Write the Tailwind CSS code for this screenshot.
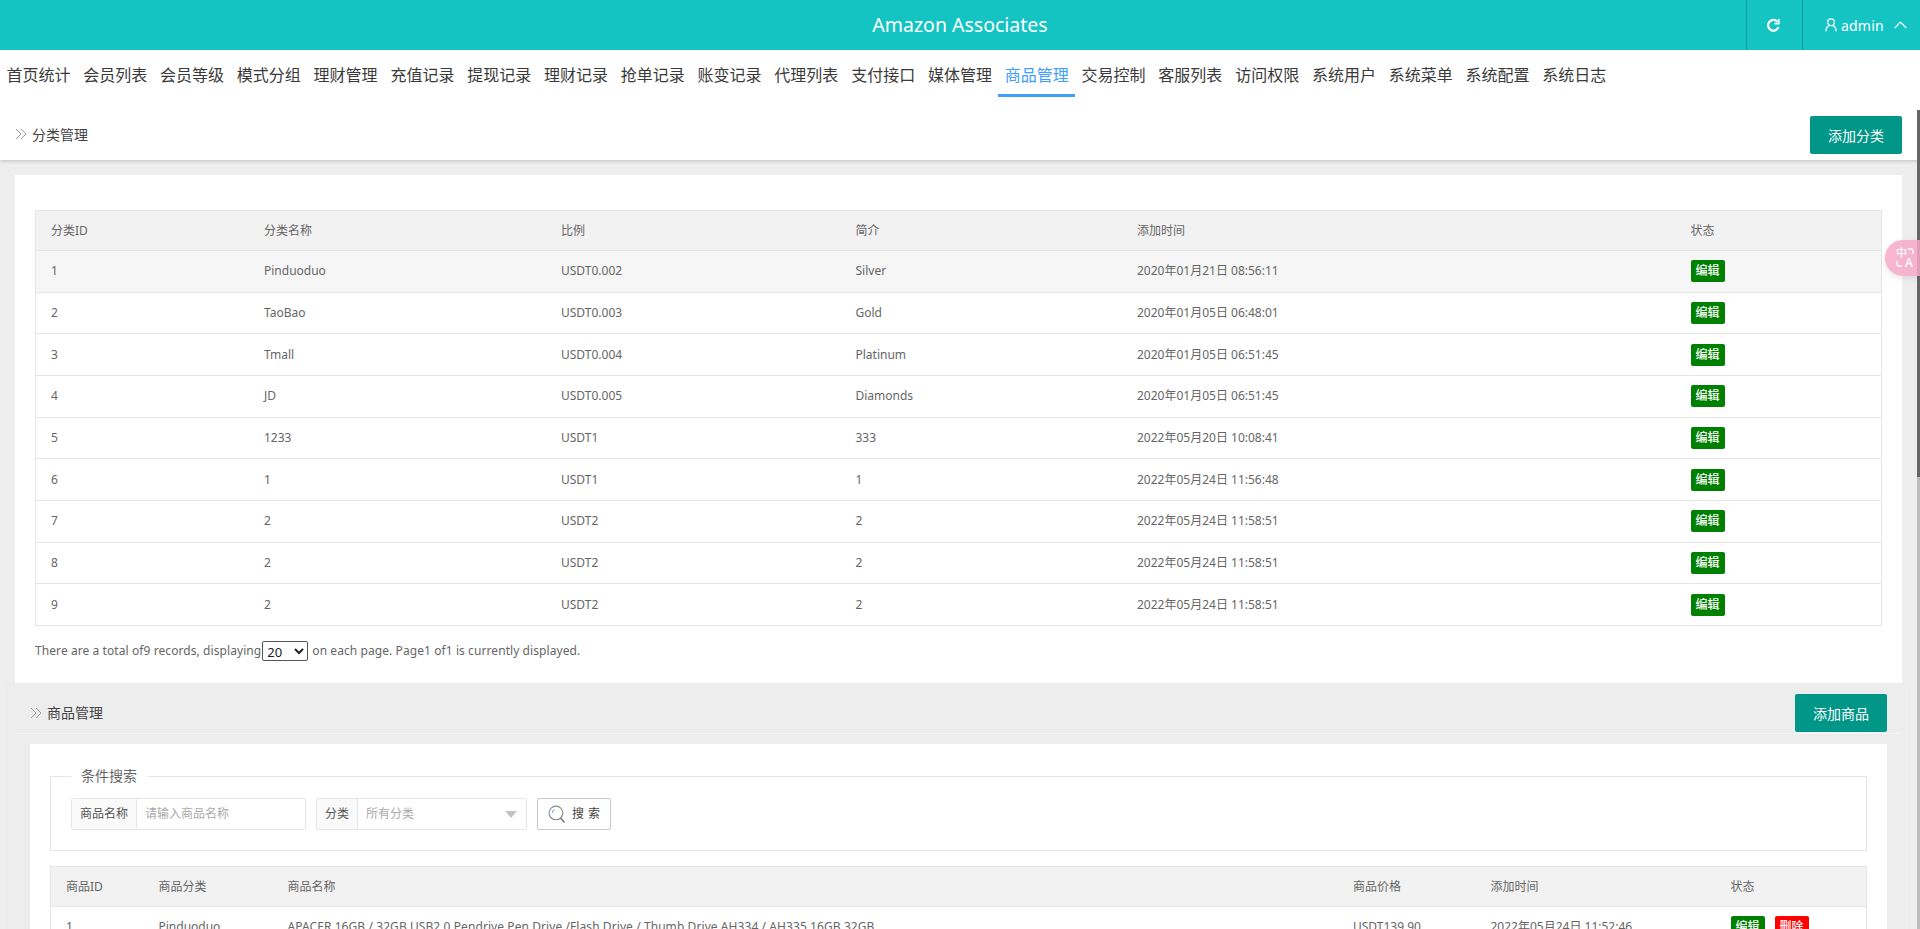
<!DOCTYPE html>
<html lang="zh">
<head>
<meta charset="utf-8">
<title>Amazon Associates</title>
<script src="https://cdn.jsdelivr.net/npm/@tailwindcss/browser@4"></script>
</head>
<body class="h-[929px] overflow-hidden bg-[#eeeeee] font-['Noto_Sans','Noto_Sans_CJK_SC',sans-serif] text-[12px] text-[#666]">
<div class="flex h-[929px] flex-col">
  <header class="relative flex h-[50px] shrink-0 items-center justify-end bg-[#13c4c3] text-white">
    <div class="absolute inset-x-0 text-center text-[19.5px] leading-[50px]">Amazon Associates</div>
    <div class="relative flex h-full w-[56px] items-center justify-center border-l border-black/20 pr-[2px]">
      <svg class="h-[15px] w-[15px]" viewBox="0 0 14 14" fill="none" stroke="white" stroke-width="2.1"><path d="M11.6 8.6A5 5 0 1 1 10.6 3.4"/><path d="M11.9 1v4.2H7.8" stroke-width="1.6"/></svg>
    </div>
    <div class="relative flex h-full w-[118px] items-center gap-[4px] border-l border-black/20 pl-[22px] text-[14px]">
      <svg class="h-[14px] w-[12px]" viewBox="0 0 12 14" fill="none" stroke="white" stroke-width="1.2"><circle cx="6" cy="4.2" r="3.4"/><path d="M.8 13.4C1 10.4 2.8 8 4.4 7.4M11.2 13.4C11 10.4 9.2 8 7.6 7.4"/></svg>
      <span class="tracking-[0.2px]">admin</span>
      <svg class="ml-[6px] h-[8px] w-[13px]" viewBox="0 0 13 8" fill="none" stroke="white" stroke-width="1.2"><path d="M.8 7 6.5 1.2 12.2 7"/></svg>
    </div>
  </header>

  <nav class="flex h-[60px] shrink-0 items-start bg-white text-[16px] text-[#3a3a3a]">
    <a class="h-[47px] w-[76.8px] text-center leading-[50px]">首页统计</a>
    <a class="h-[47px] w-[76.8px] text-center leading-[50px]">会员列表</a>
    <a class="h-[47px] w-[76.8px] text-center leading-[50px]">会员等级</a>
    <a class="h-[47px] w-[76.8px] text-center leading-[50px]">模式分组</a>
    <a class="h-[47px] w-[76.8px] text-center leading-[50px]">理财管理</a>
    <a class="h-[47px] w-[76.8px] text-center leading-[50px]">充值记录</a>
    <a class="h-[47px] w-[76.8px] text-center leading-[50px]">提现记录</a>
    <a class="h-[47px] w-[76.8px] text-center leading-[50px]">理财记录</a>
    <a class="h-[47px] w-[76.8px] text-center leading-[50px]">抢单记录</a>
    <a class="h-[47px] w-[76.8px] text-center leading-[50px]">账变记录</a>
    <a class="h-[47px] w-[76.8px] text-center leading-[50px]">代理列表</a>
    <a class="h-[47px] w-[76.8px] text-center leading-[50px]">支付接口</a>
    <a class="h-[47px] w-[76.8px] text-center leading-[50px]">媒体管理</a>
    <a class="h-[47px] w-[76.8px] border-b-[3px] border-[#409eff] text-center leading-[50px] text-[#409eff]">商品管理</a>
    <a class="h-[47px] w-[76.8px] text-center leading-[50px]">交易控制</a>
    <a class="h-[47px] w-[76.8px] text-center leading-[50px]">客服列表</a>
    <a class="h-[47px] w-[76.8px] text-center leading-[50px]">访问权限</a>
    <a class="h-[47px] w-[76.8px] text-center leading-[50px]">系统用户</a>
    <a class="h-[47px] w-[76.8px] text-center leading-[50px]">系统菜单</a>
    <a class="h-[47px] w-[76.8px] text-center leading-[50px]">系统配置</a>
    <a class="h-[47px] w-[76.8px] text-center leading-[50px]">系统日志</a>
  </nav>

  <main class="relative min-h-0 flex-1 overflow-hidden">
    <div class="relative flex h-[50px] items-center justify-between bg-white pr-[18px] pl-[15px] shadow-[0_1px_4px_rgba(0,0,0,0.2)]">
      <div class="flex items-center gap-[5px] pb-[2px] text-[14px] text-[#444]">
        <svg class="h-[12px] w-[12px]" viewBox="0 0 12 12" fill="none" stroke="#999" stroke-width="1"><path d="M1 1l5 5-5 5M6 1l5 5-5 5"/></svg>
        <span>分类管理</span>
      </div>
      <button class="h-[38px] w-[92px] rounded-[2px] bg-[#009688] text-[14px] text-white">添加分类</button>
    </div>

    <section class="mt-[15px] mr-[18px] ml-[15px] h-[508px] bg-white px-[20px] pt-[35px]">
      <table class="w-[1847px] table-fixed border border-[#e6e6e6] text-left">
        <colgroup><col class="w-[213.5px]"><col class="w-[297px]"><col class="w-[294.5px]"><col class="w-[281.5px]"><col class="w-[553.5px]"><col></colgroup>
        <thead><tr class="h-[40px] border-b border-[#e6e6e6] bg-[#f2f2f2]">
          <th class="px-[15px] font-normal">分类ID</th><th class="px-[15px] font-normal">分类名称</th><th class="px-[15px] font-normal">比例</th><th class="px-[15px] font-normal">简介</th><th class="px-[15px] font-normal">添加时间</th><th class="px-[15px] font-normal">状态</th>
        </tr></thead>
        <tbody>
          <tr class="h-[41.67px] border-b border-[#e6e6e6] bg-[#f6f6f6]"><td class="px-[15px]">1</td><td class="px-[15px]">Pinduoduo</td><td class="px-[15px]">USDT0.002</td><td class="px-[15px]">Silver</td><td class="px-[15px]">2020年01月21日 08:56:11</td><td class="px-[15px]"><span class="inline-block h-[22px] w-[34px] rounded-[2px] bg-[#008000] text-center leading-[22px] font-medium text-white">编辑</span></td></tr>
          <tr class="h-[41.67px] border-b border-[#e6e6e6]"><td class="px-[15px]">2</td><td class="px-[15px]">TaoBao</td><td class="px-[15px]">USDT0.003</td><td class="px-[15px]">Gold</td><td class="px-[15px]">2020年01月05日 06:48:01</td><td class="px-[15px]"><span class="inline-block h-[22px] w-[34px] rounded-[2px] bg-[#008000] text-center leading-[22px] font-medium text-white">编辑</span></td></tr>
          <tr class="h-[41.67px] border-b border-[#e6e6e6]"><td class="px-[15px]">3</td><td class="px-[15px]">Tmall</td><td class="px-[15px]">USDT0.004</td><td class="px-[15px]">Platinum</td><td class="px-[15px]">2020年01月05日 06:51:45</td><td class="px-[15px]"><span class="inline-block h-[22px] w-[34px] rounded-[2px] bg-[#008000] text-center leading-[22px] font-medium text-white">编辑</span></td></tr>
          <tr class="h-[41.67px] border-b border-[#e6e6e6]"><td class="px-[15px]">4</td><td class="px-[15px]">JD</td><td class="px-[15px]">USDT0.005</td><td class="px-[15px]">Diamonds</td><td class="px-[15px]">2020年01月05日 06:51:45</td><td class="px-[15px]"><span class="inline-block h-[22px] w-[34px] rounded-[2px] bg-[#008000] text-center leading-[22px] font-medium text-white">编辑</span></td></tr>
          <tr class="h-[41.67px] border-b border-[#e6e6e6]"><td class="px-[15px]">5</td><td class="px-[15px]">1233</td><td class="px-[15px]">USDT1</td><td class="px-[15px]">333</td><td class="px-[15px]">2022年05月20日 10:08:41</td><td class="px-[15px]"><span class="inline-block h-[22px] w-[34px] rounded-[2px] bg-[#008000] text-center leading-[22px] font-medium text-white">编辑</span></td></tr>
          <tr class="h-[41.67px] border-b border-[#e6e6e6]"><td class="px-[15px]">6</td><td class="px-[15px]">1</td><td class="px-[15px]">USDT1</td><td class="px-[15px]">1</td><td class="px-[15px]">2022年05月24日 11:56:48</td><td class="px-[15px]"><span class="inline-block h-[22px] w-[34px] rounded-[2px] bg-[#008000] text-center leading-[22px] font-medium text-white">编辑</span></td></tr>
          <tr class="h-[41.67px] border-b border-[#e6e6e6]"><td class="px-[15px]">7</td><td class="px-[15px]">2</td><td class="px-[15px]">USDT2</td><td class="px-[15px]">2</td><td class="px-[15px]">2022年05月24日 11:58:51</td><td class="px-[15px]"><span class="inline-block h-[22px] w-[34px] rounded-[2px] bg-[#008000] text-center leading-[22px] font-medium text-white">编辑</span></td></tr>
          <tr class="h-[41.67px] border-b border-[#e6e6e6]"><td class="px-[15px]">8</td><td class="px-[15px]">2</td><td class="px-[15px]">USDT2</td><td class="px-[15px]">2</td><td class="px-[15px]">2022年05月24日 11:58:51</td><td class="px-[15px]"><span class="inline-block h-[22px] w-[34px] rounded-[2px] bg-[#008000] text-center leading-[22px] font-medium text-white">编辑</span></td></tr>
          <tr class="h-[41.67px]"><td class="px-[15px]">9</td><td class="px-[15px]">2</td><td class="px-[15px]">USDT2</td><td class="px-[15px]">2</td><td class="px-[15px]">2022年05月24日 11:58:51</td><td class="px-[15px]"><span class="inline-block h-[22px] w-[34px] rounded-[2px] bg-[#008000] text-center leading-[22px] font-medium text-white">编辑</span></td></tr>
        </tbody>
      </table>
      <div class="mt-[15px] flex h-[20px] items-center tracking-[0.08px]">
        <span>There are a total of9 records, displaying</span>
        <select class="mx-[1px] h-[20px] w-[46px] rounded-[2px] border border-[#555] bg-white text-[13px] text-[#222]"><option>20</option></select>
        <span class="ml-[3px]">on each page. Page1 of1 is currently displayed.</span>
      </div>
    </section>

    <section class="mr-[11px] ml-[8px] h-[300px] bg-[#ededed] shadow-[0_0_2px_rgba(0,0,0,0.04)]">
      <div class="mx-[7px] flex h-[51px] items-center justify-between border-b border-[#f5f5f5] pr-[15px] pl-[15px]">
        <div class="mt-[9px] flex items-center gap-[5px] text-[14px] text-[#444]">
          <svg class="h-[12px] w-[12px]" viewBox="0 0 12 12" fill="none" stroke="#999" stroke-width="1"><path d="M1 1l5 5-5 5M6 1l5 5-5 5"/></svg>
          <span>商品管理</span>
        </div>
        <button class="mt-[10px] h-[38px] w-[92px] rounded-[2px] bg-[#009688] text-[14px] text-white">添加商品</button>
      </div>
      <div class="mx-[22px] mt-[10px] h-[240px] bg-white px-[20px] pt-[24px]">
        <fieldset class="relative h-[83px] w-[1817px] border border-[#e6e6e6]">
          <legend class="ml-[20px] px-[10px] text-[14px] leading-[16px] text-[#666]">条件搜索</legend>
          <div class="mt-[14px] ml-[20px] flex items-stretch">
            <div class="flex h-[32px] w-[235px] rounded-[2px] border border-[#e6e6e6]">
              <span class="w-[65px] border-r border-[#e6e6e6] bg-[#fafafa] text-center leading-[30px] text-[#555]">商品名称</span>
              <span class="pl-[8px] leading-[30px] text-[#aaa]">请输入商品名称</span>
            </div>
            <div class="ml-[10px] flex h-[32px] w-[211px] rounded-[2px] border border-[#e6e6e6]">
              <span class="w-[41px] border-r border-[#e6e6e6] bg-[#fafafa] text-center leading-[30px] text-[#555]">分类</span>
              <span class="flex-1 pl-[8px] leading-[30px] text-[#aaa]">所有分类</span>
              <span class="mt-[12px] mr-[9px] h-0 w-0 border-x-[6px] border-t-[7px] border-x-transparent border-t-[#c2c2c2]"></span>
            </div>
            <button class="ml-[10px] flex h-[32px] w-[74px] items-center justify-center gap-[6px] rounded-[2px] border border-[#c9c9c9] bg-white pl-[4px] text-[#444]">
              <svg class="h-[19px] w-[18px]" viewBox="0 0 17 18" fill="none" stroke-width="1.1"><circle cx="7.5" cy="7.5" r="6.5" stroke="#8a8a8a"/><path d="M4 7.5A3.5 3.5 0 0 1 6 4.5" stroke="#7aa7d8"/><path d="M12 12.6l3.6 4" stroke="#777" stroke-width="1.5"/></svg>
              <span class="tracking-[4px]">搜索</span>
            </button>
          </div>
        </fieldset>
        <table class="mt-[15px] w-[1817px] table-fixed border border-[#e6e6e6] text-left">
          <colgroup><col class="w-[93px]"><col class="w-[129px]"><col class="w-[1065.5px]"><col class="w-[137.5px]"><col class="w-[240px]"><col></colgroup>
          <thead><tr class="h-[40px] border-b border-[#e6e6e6] bg-[#f2f2f2]">
            <th class="px-[15px] font-normal">商品ID</th><th class="px-[15px] font-normal">商品分类</th><th class="px-[15px] font-normal">商品名称</th><th class="px-[15px] font-normal">商品价格</th><th class="px-[15px] font-normal">添加时间</th><th class="px-[15px] font-normal">状态</th>
          </tr></thead>
          <tbody>
            <tr class="h-[41.67px]"><td class="px-[15px]">1</td><td class="px-[15px]">Pinduoduo</td><td class="px-[15px] tracking-[0.08px]">APACER 16GB / 32GB USB2.0 Pendrive Pen Drive /Flash Drive / Thumb Drive AH334 / AH335 16GB 32GB</td><td class="px-[15px]">USDT139.90</td><td class="px-[15px]">2022年05月24日 11:52:46</td><td class="px-[15px]"><span class="inline-block h-[22px] w-[34px] rounded-[2px] bg-[#008000] text-center leading-[22px] font-medium text-white">编辑</span><span class="ml-[10px] inline-block h-[22px] w-[34px] rounded-[2px] bg-[#ff0000] text-center leading-[22px] font-medium text-white">删除</span></td></tr>
          </tbody>
        </table>
      </div>
    </section>

    <div class="absolute top-0 right-0 bottom-0 w-[3px] bg-[#bdbdbd]"><div class="h-[367px] bg-[#666]"></div></div>
  </main>

  <div class="absolute top-[240px] right-0 h-[36px] w-[35px] rounded-l-[18px] bg-[#f7a8c8]/85 text-white shadow-[0_2px_6px_rgba(0,0,0,0.1)]">
    <span class="absolute top-[7px] left-[11px] text-[11px] leading-[11px] font-medium">中</span>
    <span class="absolute top-[17px] left-[20px] text-[12px] leading-[12px] font-medium">A</span>
    <svg class="absolute top-[8px] left-[11px] h-[20px] w-[20px]" viewBox="0 0 20 20" fill="none" stroke="white" stroke-width="1.3"><path d="M12 1h3a2 2 0 0 1 2 2v3M1 13v3a2 2 0 0 0 2 2h3"/></svg>
  </div>
</div>
</body>
</html>
